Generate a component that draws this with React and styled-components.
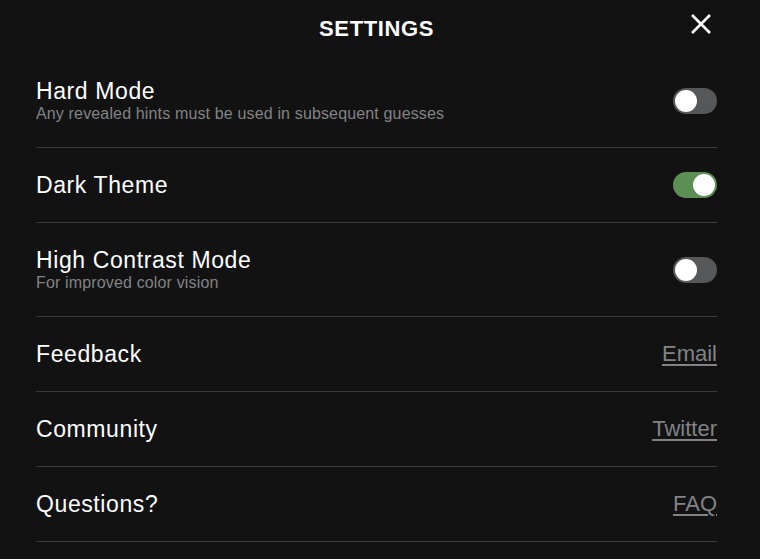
import React, { useState } from 'react';
import styled, { createGlobalStyle } from 'styled-components';

const GlobalStyle = createGlobalStyle`
  html, body {
    margin: 0;
    padding: 0;
    background: #121213;
    font-family: "Liberation Sans", Arial, sans-serif;
    color: #ffffff;
  }
  * {
    box-sizing: border-box;
  }
`;

const Page = styled.div`
  width: 760px;
  min-height: 559px;
  background: #121213;
  padding: 0 43px 0 36px;
`;

const Header = styled.header`
  height: 54px;
  display: flex;
  align-items: center;
  justify-content: center;
  position: relative;
`;

const Title = styled.h1`
  margin: 0;
  padding-top: 3px;
  font-size: 22px;
  font-weight: 700;
  letter-spacing: 0.6px;
  text-transform: uppercase;
`;

const CloseButton = styled.button`
  position: absolute;
  right: 2px;
  top: 10px;
  width: 28px;
  height: 28px;
  padding: 0;
  border: none;
  background: none;
  color: #ffffff;
  display: flex;
  align-items: center;
  justify-content: center;
  cursor: pointer;
`;

const Row = styled.div`
  display: flex;
  align-items: center;
  justify-content: space-between;
  padding: 24px 0;
  border-bottom: 1px solid #3a3a3c;
`;

const Text = styled.div`
  display: flex;
  flex-direction: column;
`;

const Label = styled.div`
  font-size: 23px;
  line-height: 26px;
  letter-spacing: 0.6px;
  color: #ffffff;
`;

const Description = styled.div`
  font-size: 16px;
  line-height: 18px;
  margin-top: 1px;
  letter-spacing: 0.15px;
  color: #818384;
`;

const Switch = styled.button`
  width: 44px;
  height: 26px;
  border: none;
  border-radius: 13px;
  padding: 2px;
  background: ${(p) => (p.$on ? '#5c8f54' : '#565758')};
  display: flex;
  justify-content: ${(p) => (p.$on ? 'flex-end' : 'flex-start')};
  cursor: pointer;
`;

const Knob = styled.span`
  width: 22px;
  height: 22px;
  border-radius: 50%;
  background: #ffffff;
`;

const LinkText = styled.a`
  font-size: 22px;
  line-height: 26px;
  color: #818384;
  text-decoration: underline;
  text-underline-offset: 3px;
`;

const toggles = [
  { key: 'hard', label: 'Hard Mode', desc: 'Any revealed hints must be used in subsequent guesses' },
  { key: 'dark', label: 'Dark Theme' },
  { key: 'contrast', label: 'High Contrast Mode', desc: 'For improved color vision' },
];

const links = [
  { label: 'Feedback', text: 'Email' },
  { label: 'Community', text: 'Twitter' },
  { label: 'Questions?', text: 'FAQ' },
];

export default function App() {
  const [state, setState] = useState({ hard: false, dark: true, contrast: false });

  return (
    <Page>
      <GlobalStyle />
      <Header>
        <Title>Settings</Title>
        <CloseButton aria-label="Close">
          <svg width="24" height="24" viewBox="0 0 24 24" fill="none">
            <path d="M3 3L21 21M21 3L3 21" stroke="#fff" strokeWidth="2.6" strokeLinecap="butt" />
          </svg>
        </CloseButton>
      </Header>
      {toggles.map((t) => (
        <Row key={t.key}>
          <Text>
            <Label>{t.label}</Label>
            {t.desc && <Description>{t.desc}</Description>}
          </Text>
          <Switch
            $on={state[t.key]}
            onClick={() => setState((s) => ({ ...s, [t.key]: !s[t.key] }))}
          >
            <Knob />
          </Switch>
        </Row>
      ))}
      {links.map((l) => (
        <Row key={l.label}>
          <Label>{l.label}</Label>
          <LinkText href="#">{l.text}</LinkText>
        </Row>
      ))}
    </Page>
  );
}
